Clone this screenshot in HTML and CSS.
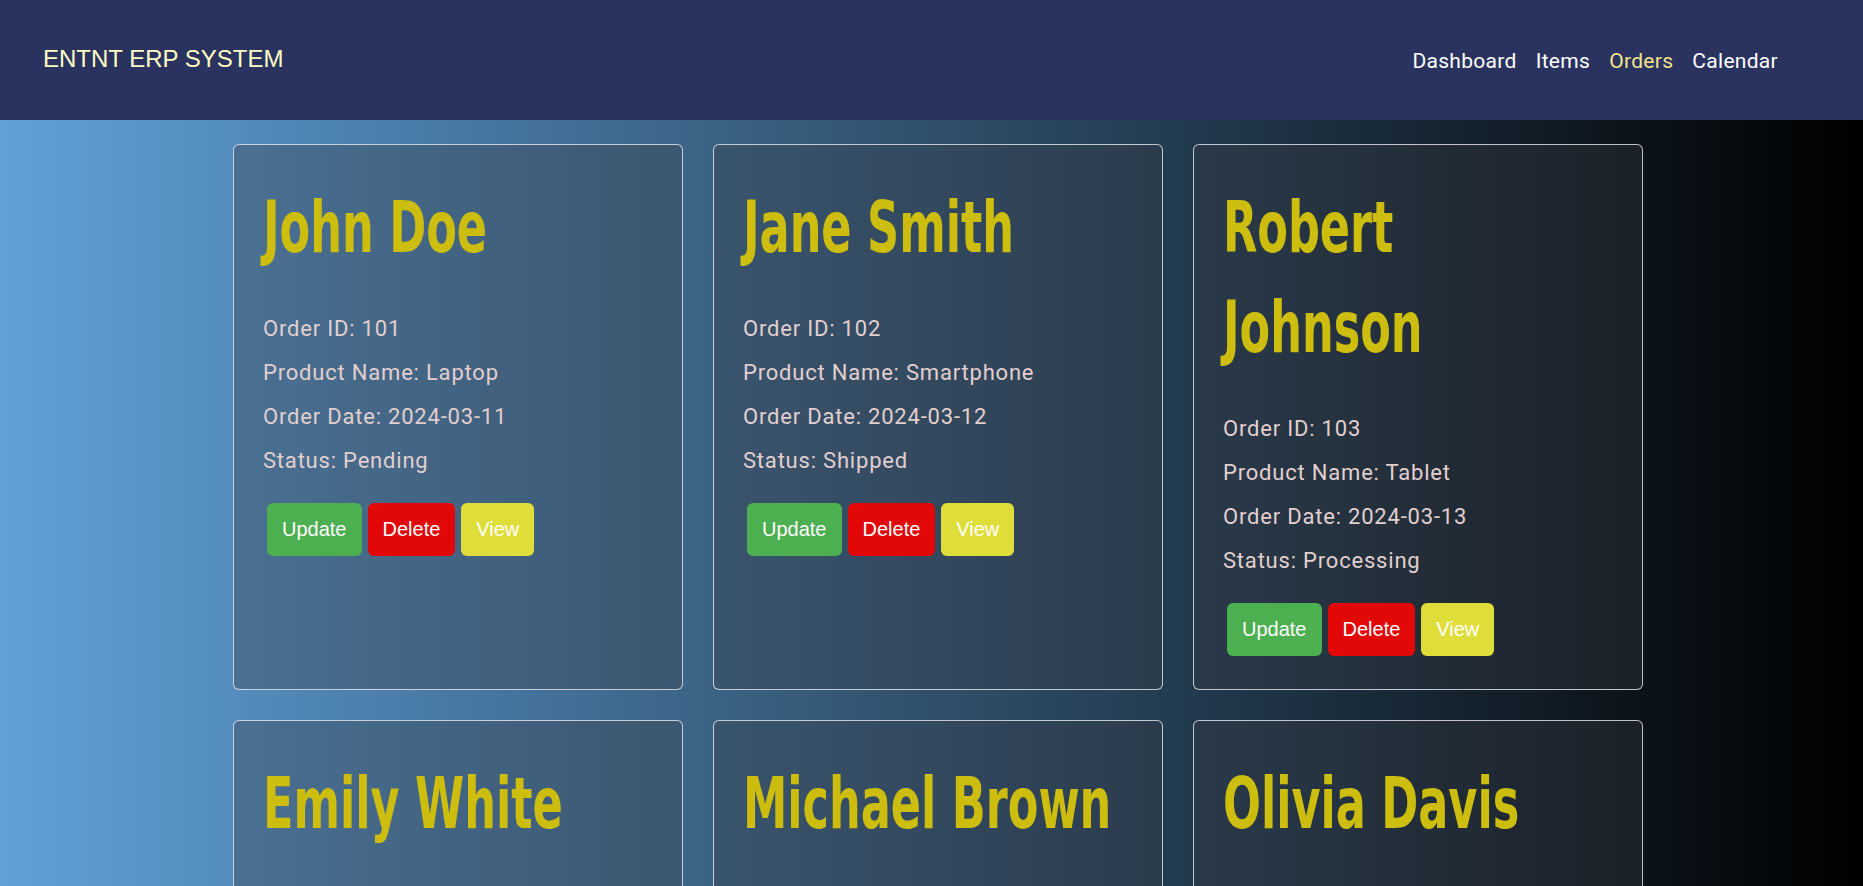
FILE: index.html
```html
<!DOCTYPE html>
<html lang="en">
<head>
<meta charset="utf-8">
<title>ENTNT ERP SYSTEM - Orders</title>
<link rel="stylesheet" href="styles.css">
</head>
<body>
<header class="topbar">
  <div class="logo">ENTNT ERP SYSTEM</div>
  <nav class="nav">
    <a class="nav-link" href="#">Dashboard</a>
    <a class="nav-link" href="#">Items</a>
    <a class="nav-link active" href="#">Orders</a>
    <a class="nav-link" href="#">Calendar</a>
  </nav>
</header>
<main class="orders">
  <div class="card">
    <h2 class="customer">John Doe</h2>
    <p class="field">Order ID: 101</p>
    <p class="field">Product Name: Laptop</p>
    <p class="field">Order Date: 2024-03-11</p>
    <p class="field">Status: Pending</p>
    <div class="actions">
      <button class="btn btn-update">Update</button>
      <button class="btn btn-delete">Delete</button>
      <button class="btn btn-view">View</button>
    </div>
  </div>
  <div class="card">
    <h2 class="customer">Jane Smith</h2>
    <p class="field">Order ID: 102</p>
    <p class="field">Product Name: Smartphone</p>
    <p class="field">Order Date: 2024-03-12</p>
    <p class="field">Status: Shipped</p>
    <div class="actions">
      <button class="btn btn-update">Update</button>
      <button class="btn btn-delete">Delete</button>
      <button class="btn btn-view">View</button>
    </div>
  </div>
  <div class="card">
    <h2 class="customer">Robert Johnson</h2>
    <p class="field">Order ID: 103</p>
    <p class="field">Product Name: Tablet</p>
    <p class="field">Order Date: 2024-03-13</p>
    <p class="field">Status: Processing</p>
    <div class="actions">
      <button class="btn btn-update">Update</button>
      <button class="btn btn-delete">Delete</button>
      <button class="btn btn-view">View</button>
    </div>
  </div>
  <div class="card">
    <h2 class="customer">Emily White</h2>
    <p class="field">Order ID: 104</p>
    <p class="field">Product Name: Headphones</p>
    <p class="field">Order Date: 2024-03-14</p>
    <p class="field">Status: Delivered</p>
    <div class="actions">
      <button class="btn btn-update">Update</button>
      <button class="btn btn-delete">Delete</button>
      <button class="btn btn-view">View</button>
    </div>
  </div>
  <div class="card">
    <h2 class="customer">Michael Brown</h2>
    <p class="field">Order ID: 105</p>
    <p class="field">Product Name: Monitor</p>
    <p class="field">Order Date: 2024-03-15</p>
    <p class="field">Status: Pending</p>
    <div class="actions">
      <button class="btn btn-update">Update</button>
      <button class="btn btn-delete">Delete</button>
      <button class="btn btn-view">View</button>
    </div>
  </div>
  <div class="card">
    <h2 class="customer">Olivia Davis</h2>
    <p class="field">Order ID: 106</p>
    <p class="field">Product Name: Keyboard</p>
    <p class="field">Order Date: 2024-03-16</p>
    <p class="field">Status: Shipped</p>
    <div class="actions">
      <button class="btn btn-update">Update</button>
      <button class="btn btn-delete">Delete</button>
      <button class="btn btn-view">View</button>
    </div>
  </div>
</main>
</body>
</html>
```
FILE: styles.css
```css
* { box-sizing: border-box; }

html, body {
  margin: 0;
  padding: 0;
}

body {
  min-height: 100vh;
  font-family: Roboto, "Liberation Sans", sans-serif;
  background: linear-gradient(to right, #5fa0d8 0%, #000000 100%);
  background-attachment: fixed;
}

.topbar {
  height: 120px;
  background: #2a3360;
  display: flex;
  align-items: center;
  justify-content: space-between;
  padding: 0 85px 0 43px;
}

.logo {
  font-family: "Liberation Sans", Arial, sans-serif;
  font-size: 24px;
  color: #fffdc4;
  margin-top: -2px;
}

.nav {
  display: flex;
  gap: 19px;
  margin-top: 2px;
}

.nav-link {
  font-family: Roboto, sans-serif;
  font-size: 21px;
  letter-spacing: 0.3px;
  color: #ffffff;
  text-decoration: none;
}

.nav-link.active {
  color: #f3e38a;
}

.orders {
  display: grid;
  grid-template-columns: repeat(3, 450px);
  column-gap: 30px;
  row-gap: 30px;
  padding: 24px 0 40px 233px;
}

.card {
  border: 1px solid rgba(235, 235, 240, 0.8);
  border-radius: 6px;
  background: rgba(58, 60, 68, 0.35);
  padding: 32px 30px 33px 29px;
}

.customer {
  margin: 0 0 40px;
  width: 548px;
  font-family: "DejaVu Sans Condensed", "DejaVu Sans", sans-serif;
  font-weight: 700;
  font-size: 72px;
  line-height: 100px;
  color: #cdbd0e;
  transform: scaleX(0.688);
  transform-origin: 0 0;
}

.field {
  margin: 20px 0;
  font-size: 22px;
  letter-spacing: 0.8px;
  line-height: 24px;
  color: #e2cfcf;
}

.actions {
  display: flex;
  gap: 6px;
  margin: 30px 0 0 4px;
}

.btn {
  font-family: "Liberation Sans", Arial, sans-serif;
  font-size: 20px;
  line-height: 23px;
  padding: 15px;
  border: none;
  border-radius: 6px;
  color: #ffffff;
  cursor: pointer;
}

.btn-update { background: #4caf50; }
.btn-delete { background: #e30808; }
.btn-view { background: #dfdd3a; }
```
